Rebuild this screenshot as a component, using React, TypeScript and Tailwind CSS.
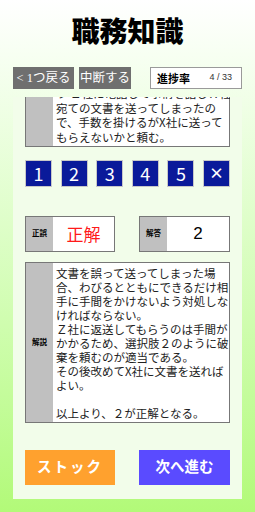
const jp = "font-['Noto_Sans_CJK_JP',sans-serif]";
const serif = "font-['Liberation_Serif','Noto_Sans_CJK_JP',serif]";

const question = [
  "ラ Ｚ社に電話して事情を話しＸ社",
  "宛ての文書を送ってしまったの",
  "で、手数を掛けるがX社に送って",
  "もらえないかと頼む。",
];

const explanation = [
  "文書を誤って送ってしまった場",
  "合、わびるとともにできるだけ相",
  "手に手間をかけないよう対処しな",
  "ければならない。",
  "Ｚ社に返送してもらうのは手間が",
  "かかるため、選択肢２のように破",
  "棄を頼むのが適当である。",
  "その後改めてX社に文書を送れば",
  "よい。",
  "",
  "以上より、２が正解となる。",
];

const choices = ["1", "2", "3", "4", "5", "×"];

export default function App() {
  return (
    <div className={`flex h-[512px] w-[255px] flex-col overflow-hidden bg-gradient-to-b from-white to-[#b2fa78] ${jp}`}>
      <h1 className="pt-[16px] text-center text-[28px] leading-[29px] font-black text-black">職務知識</h1>

      <div className="mx-[13px] mt-[22px] flex h-[22px] items-stretch">
        <button className={`flex w-[61px] items-center justify-center bg-[#6f6f6f] text-[12.5px] text-white ${serif}`}>
          &lt; 1つ戻る
        </button>
        <button className={`ml-[5px] flex w-[52px] items-center justify-center bg-[#6f6f6f] text-[12.5px] text-white ${serif}`}>
          中断する
        </button>
        <div className="ml-auto flex w-[92px] items-center border border-[#9a9a9a] bg-white pl-[6px]">
          <span className="text-[11px] font-bold text-black">進捗率</span>
          <span className="ml-auto pr-[9px] font-['Liberation_Sans',sans-serif] text-[9px] text-[#333]">4 / 33</span>
        </div>
      </div>

      <div className="mx-[13px] mt-[8px] mb-[13px] flex flex-1 flex-col bg-[#f2fdea] px-[12px] pb-[14px]">
        <div className="h-[52px] overflow-hidden">
          <div className="-mt-[11px] flex border-x border-b border-[#777] bg-white">
            <div className="w-[27px] shrink-0 bg-[#c0c0c0]" />
            <div className="pl-[3px] pb-[2px] text-[11.5px] leading-[14.5px] whitespace-nowrap text-[#222]">
              {question.map((l, i) => (
                <div key={i}>{l}</div>
              ))}
            </div>
          </div>
        </div>

        <div className="mt-[11px] flex justify-between">
          {choices.map((c) => (
            <button
              key={c}
              className={`flex h-[27px] w-[27px] items-center justify-center border border-[#c8c8c8] bg-[#0a1a9a] text-white ${c === "×" ? "text-[15px] font-bold" : "text-[18px]"}`}
            >
              {c}
            </button>
          ))}
        </div>

        <div className="mt-[29px] flex justify-between">
          <div className="flex h-[36px] w-[90px] border border-[#777] bg-white">
            <div className={`flex w-[27px] items-center justify-center bg-[#c0c0c0] text-[7.5px] font-bold text-black ${serif}`}>正誤</div>
            <div className="flex flex-1 items-center justify-center text-[17px] text-[#ff1a1a]">正解</div>
          </div>
          <div className="flex h-[36px] w-[91px] border border-[#777] bg-white">
            <div className={`flex w-[27px] items-center justify-center bg-[#c0c0c0] text-[7.5px] font-bold text-black ${serif}`}>解答</div>
            <div className="flex flex-1 items-center justify-center font-['Liberation_Sans',sans-serif] text-[17px] text-black">2</div>
          </div>
        </div>

        <div className="mt-[10px] flex border border-[#777] bg-white">
          <div className={`flex w-[27px] shrink-0 items-center justify-center bg-[#c0c0c0] text-[7.5px] font-bold text-black ${serif}`}>解説</div>
          <div className="pt-[3px] pb-[2px] pl-[3px] text-[11.5px] leading-[14px] whitespace-nowrap text-[#222]">
            {explanation.map((l, i) => (
              <div key={i} className="h-[14px] leading-[14px]">{l}</div>
            ))}
          </div>
        </div>

        <div className="mt-auto flex justify-between">
          <button className={`h-[35px] w-[90px] bg-[#ffa12e] text-[14.5px] font-bold tracking-[2px] text-white ${serif}`}>ストック</button>
          <button className={`h-[35px] w-[91px] bg-[#5a4bff] text-[14.5px] font-bold text-white ${serif}`}>次へ進む</button>
        </div>
      </div>
    </div>
  );
}
